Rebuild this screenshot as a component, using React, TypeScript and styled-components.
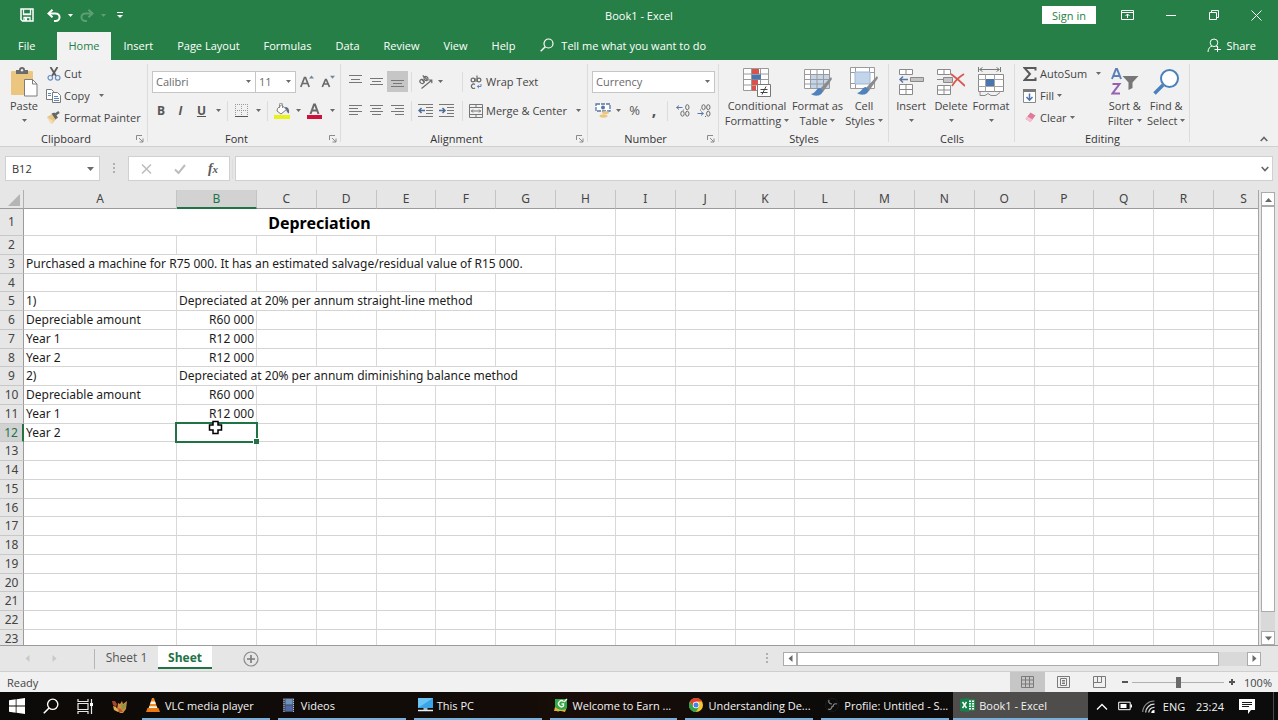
import React from "react";
import styled, { createGlobalStyle, css } from "styled-components";

const ui = '"Open Sans", "Noto Sans", "Liberation Sans", sans-serif';
const sheetFont = '"Noto Sans", "Open Sans", "Liberation Sans", sans-serif';
const green = "#267f46";
const accent = "#217346";
const ink = "#444444";
const grey = "#6a6a6a";

const Global = createGlobalStyle`
  *, *::before, *::after { box-sizing: border-box; }
  body { margin: 0; font: 11px/15px ${ui}; color: #333333; background: #e6e6e6; }
  button, input, select { font: inherit; color: inherit; margin: 0; padding: 0; border: 0; background: none; border-radius: 0; }
  button { cursor: default; white-space: nowrap; }
  svg { display: block; flex: none; }
`;

const Window = styled.div`
  display: flex;
  flex-direction: column;
  height: 100vh;
  overflow: hidden;
`;

/* ---------- title bar ---------- */
const TitleBar = styled.header`
  display: grid;
  grid-template-columns: 1fr auto 1fr;
  align-items: center;
  height: 30px;
  flex: none;
  background: ${green};
  color: #ffffff;
`;
const QuickAccess = styled.div`
  display: flex;
  align-items: center;
  padding-left: 14px;
`;
const Title = styled.h1`
  margin: 0;
  font-size: 11px;
  line-height: 15px;
  font-weight: 400;
`;
const WindowControls = styled.div`
  display: flex;
  align-items: center;
  justify-content: flex-end;
`;
const SignIn = styled.button`
  height: 18px;
  width: 54px;
  margin-right: 10px;
  background: #ffffff;
  color: ${green};
`;

const IconButton = styled.button<{ $w: number; $h?: number; $on?: boolean; $dim?: boolean }>`
  display: flex;
  align-items: center;
  justify-content: center;
  flex: none;
  width: ${(p) => p.$w}px;
  height: ${(p) => p.$h ?? 21}px;
  background: ${(p) => (p.$on ? "#c6c6c6" : "transparent")};
  opacity: ${(p) => (p.$dim ? 0.25 : 1)};
`;

/* ---------- tab strip ---------- */
const TabBar = styled.nav`
  display: flex;
  align-items: flex-end;
  height: 30px;
  flex: none;
  padding-left: 7px;
  background: ${green};
  color: #ffffff;
`;
const Tab = styled.button<{ $active?: boolean; $first?: boolean }>`
  height: 28px;
  padding: 0 11px 2px;
  margin-right: ${(p) => (p.$first ? 11 : 2)}px;
  background: ${(p) => (p.$active ? "#f2f2f2" : "transparent")};
  color: ${(p) => (p.$active ? green : "#ffffff")};
`;
const TellMe = styled.label`
  display: flex;
  align-items: center;
  gap: 7px;
  height: 28px;
  padding-bottom: 2px;
  margin-left: 12px;
`;
const TellMeInput = styled.input`
  width: 160px;
  outline: none;
  &::placeholder { color: #ffffff; opacity: 1; }
`;
const Share = styled.button`
  display: flex;
  align-items: center;
  gap: 4px;
  height: 28px;
  padding-bottom: 2px;
  margin-left: auto;
  margin-right: 22px;
`;

/* ---------- ribbon ---------- */
const Ribbon = styled.section`
  display: flex;
  flex: none;
  height: 87px;
  background: #f1f1f1;
  border-bottom: 1px solid #d0d0d0;
`;
const Group = styled.div<{ $w: number }>`
  position: relative;
  display: flex;
  flex-direction: column;
  flex: none;
  width: ${(p) => p.$w}px;
  padding-top: 3px;
  &::after {
    content: "";
    position: absolute;
    right: 0;
    top: 4px;
    bottom: 4px;
    border-right: 1px solid #dcdcdc;
  }
`;
const GroupBody = styled.div<{ $pad?: number }>`
  display: flex;
  height: 68px;
  padding-left: ${(p) => p.$pad ?? 4}px;
`;
const GroupFooter = styled.div<{ $launcher?: boolean }>`
  display: grid;
  grid-template-columns: ${(p) => (p.$launcher ? "1fr 16px" : "1fr")};
  align-items: center;
  height: 15px;
  text-align: center;
`;
const BigButton = styled.button<{ $w: number }>`
  display: flex;
  flex-direction: column;
  align-items: center;
  flex: none;
  width: ${(p) => p.$w}px;
  height: 68px;
  padding-top: 3px;
  color: ${ink};
`;
const BigIcon = styled.span`
  display: flex;
  align-items: center;
  height: 32px;
`;
const BigLine = styled.span`
  display: flex;
  align-items: center;
  gap: 3px;
  height: 15px;
`;
const SmallStack = styled.div`
  display: flex;
  flex-direction: column;
  gap: 1px;
`;
const SmallButton = styled.button`
  display: flex;
  align-items: center;
  height: 21px;
  gap: 3px;
  color: ${ink};
`;
const SmallIcon = styled.span`
  display: flex;
  justify-content: center;
  width: 15px;
`;
const CaretSlot = styled.span`
  display: flex;
  padding-left: 6px;
`;
const ToolRows = styled.div`
  display: flex;
  flex-direction: column;
  gap: 8px;
  padding-top: 8px;
`;
const ToolRow = styled.div`
  display: flex;
  align-items: center;
  height: 21px;
`;
const ToolPair = styled.div`
  display: flex;
  width: 42px;
`;
const Divider = styled.span<{ $m?: number }>`
  width: 1px;
  height: 20px;
  margin: 0 ${(p) => p.$m ?? 4}px;
  background: #dcdcdc;
`;
const SelectBox = styled.span<{ $w: number }>`
  position: relative;
  display: block;
  width: ${(p) => p.$w}px;
  height: 22px;
  margin-right: -1px;
  > svg { position: absolute; right: 5px; top: 9px; pointer-events: none; }
`;
const Select = styled.select`
  appearance: none;
  width: 100%;
  height: 100%;
  padding-left: 3px;
  border: 1px solid #c6c6c6;
  background: #ffffff;
  color: ${grey};
`;
const Glyph = styled.span<{ $b?: boolean; $i?: boolean; $u?: boolean; $size?: number }>`
  font-size: ${(p) => p.$size ?? 12}px;
  line-height: 15px;
  font-weight: ${(p) => (p.$b ? 700 : 400)};
  font-style: ${(p) => (p.$i ? "italic" : "normal")};
  text-decoration: ${(p) => (p.$u ? "underline" : "none")};
  color: #565656;
`;
const Collapse = styled.div`
  display: flex;
  flex: 1;
  align-items: flex-end;
  justify-content: flex-end;
  padding: 0 4px 0 0;
`;

/* ---------- formula bar ---------- */
const FormulaBar = styled.section`
  display: flex;
  align-items: center;
  flex: none;
  height: 43px;
  padding: 0 5px;
  background: #e6e6e6;
`;
const BarBox = styled.div<{ $w?: number }>`
  display: flex;
  align-items: center;
  flex: ${(p) => (p.$w ? "none" : "1")};
  width: ${(p) => (p.$w ? `${p.$w}px` : "auto")};
  height: 25px;
  background: #ffffff;
  border: 1px solid #d0d0d0;
`;
const BarInput = styled.input`
  flex: 1;
  min-width: 0;
  height: 100%;
  padding-left: 6px;
  outline: none;
`;
const Dots = styled.span<{ $m: number }>`
  width: 2px;
  height: 11px;
  margin: 0 ${(p) => p.$m}px;
  background: repeating-linear-gradient(#b0b0b0 0 2px, transparent 2px 4px);
`;

/* ---------- sheet ---------- */
const SheetArea = styled.main`
  display: flex;
  flex: 1;
  min-height: 0;
  border-bottom: 1px solid #9b9b9b;
`;
const GridView = styled.div`
  flex: 1;
  min-width: 0;
  overflow: hidden;
  border-right: 1px solid #a6a6a6;
`;
const SheetTable = styled.table`
  width: calc(100% + 16px);
  table-layout: fixed;
  border-collapse: separate;
  border-spacing: 0;
  font: 12px/16px ${sheetFont};
  color: #1c1c1c;
`;
const Col = styled.col<{ $w: number }>`
  width: ${(p) => p.$w}px;
`;
const ColHead = styled.th<{ $on?: boolean }>`
  height: 19px;
  padding: 0;
  font-weight: 400;
  color: ${(p) => (p.$on ? accent : ink)};
  background: ${(p) => (p.$on ? "#d2d2d2" : "#e6e6e6")};
  border-right: 1px solid #c4c4c4;
  border-bottom: ${(p) => (p.$on ? `2px solid ${accent}` : "1px solid #9b9b9b")};
`;
const Corner = styled.th`
  padding: 0 3px 2px 0;
  vertical-align: bottom;
  background: #e6e6e6;
  border-right: 1px solid #b0b0b0;
  border-bottom: 1px solid #9b9b9b;
  > svg { margin-left: auto; }
`;
const Row = styled.tr<{ $tall?: boolean }>`
  height: ${(p) => (p.$tall ? 27 : 19)}px;
  &:nth-child(4n) { height: 18px; }
`;
const RowHead = styled.th<{ $on?: boolean }>`
  padding: 0;
  font-weight: 400;
  color: ${(p) => (p.$on ? accent : ink)};
  background: ${(p) => (p.$on ? "#d2d2d2" : "#e6e6e6")};
  border-right: ${(p) => (p.$on ? `2px solid ${accent}` : "1px solid #9b9b9b")};
  border-bottom: 1px solid #c8c8c8;
`;
const Cell = styled.td<{ $align?: string; $title?: boolean }>`
  position: relative;
  padding: 0 2px;
  white-space: nowrap;
  background: #ffffff;
  border-right: 1px solid #d9d9d9;
  border-bottom: 1px solid #d4d4d4;
  text-align: ${(p) => p.$align ?? "left"};
  ${(p) =>
    p.$title &&
    css`
      padding-top: 2px;
      font-size: 16px;
      line-height: 22px;
      font-weight: 700;
      color: #000000;
    `}
`;
const Selection = styled.div`
  position: absolute;
  z-index: 1;
  inset: -2px;
  border: 2px solid ${accent};
  &::after {
    content: "";
    position: absolute;
    right: -3px;
    bottom: -3px;
    width: 6px;
    height: 6px;
    background: ${accent};
    border: 1px solid #ffffff;
    border-width: 1px 0 0 1px;
  }
`;
const Pointer = styled.svg`
  position: absolute;
  z-index: 2;
  left: 31px;
  top: -4px;
`;

const VScroll = styled.div`
  display: flex;
  flex-direction: column;
  flex: none;
  width: 14px;
  margin: 2px 3px 0 2px;
  background: #d9d9d9;
`;
const ScrollButton = styled.button`
  display: flex;
  align-items: center;
  justify-content: center;
  flex: none;
  width: 14px;
  height: 14px;
  background: #ffffff;
  border: 1px solid #ababab;
`;
const VThumb = styled.div`
  flex: 1;
  margin-bottom: 19px;
  background: #ffffff;
  border: 1px solid #ababab;
`;
const HThumb = styled.div`
  flex: 1;
  margin-right: 28px;
  background: #ffffff;
  border: 1px solid #ababab;
`;

/* ---------- sheet tabs ---------- */
const SheetBar = styled.section`
  display: flex;
  align-items: center;
  flex: none;
  height: 26px;
  padding-right: 17px;
  background: #e6e6e6;
  border-bottom: 1px solid #cfcfcf;
`;
const SheetNav = styled.div`
  display: flex;
  align-items: center;
  width: 95px;
  height: 20px;
  padding-left: 14px;
  border-right: 1px solid #b5b5b5;
`;
const SheetTab = styled.button<{ $active?: boolean }>`
  align-self: flex-start;
  height: 23px;
  padding-top: 2px;
  width: ${(p) => (p.$active ? 54 : 63)}px;
  font-size: 12px;
  font-weight: ${(p) => (p.$active ? 700 : 400)};
  color: ${(p) => (p.$active ? accent : "#555555")};
  background: ${(p) => (p.$active ? "#ffffff" : "transparent")};
  border-bottom: 2px solid ${(p) => (p.$active ? accent : "transparent")};
`;
const AddSheet = styled.button`
  margin-left: 31px;
`;
const HScroll = styled.div`
  display: flex;
  flex: 0 1 478px;
  height: 14px;
  background: #d9d9d9;
`;
const Spacer = styled.span`
  flex: 1;
`;

/* ---------- status bar ---------- */
const StatusBar = styled.footer`
  display: flex;
  align-items: center;
  flex: none;
  height: 20px;
  padding: 0 6px 0 7px;
  background: #f1f1f1;
  color: ${ink};
`;
const ZoomRange = styled.input`
  appearance: none;
  width: 92px;
  height: 15px;
  &::-webkit-slider-runnable-track { height: 1px; background: #b0b0b0; }
  &::-webkit-slider-thumb {
    appearance: none;
    width: 5px;
    height: 11px;
    margin-top: -5px;
    background: #6a6a6a;
  }
`;
const ZoomValue = styled.output`
  width: 33px;
  text-align: right;
`;

/* ---------- taskbar ---------- */
const Taskbar = styled.nav`
  display: flex;
  flex: none;
  height: 28px;
  background: linear-gradient(90deg, #0c0a08, #130c08 40%, #1a0d09 46%, #0d0b0a 60%, #0c0c0c);
  color: #f2f2f2;
`;
const TaskShortcuts = styled.div`
  display: flex;
  width: 137px;
  flex: none;
`;
const TaskList = styled.div`
  display: flex;
  flex: 1;
  gap: 8px;
  min-width: 0;
  padding-left: 5px;
`;
const Task = styled.button<{ $active?: boolean }>`
  display: flex;
  align-items: center;
  gap: 4px;
  flex: ${(p) => (p.$active ? "1 1 135px" : "0 1 128px")};
  min-width: 0;
  height: 28px;
  padding-left: ${(p) => (p.$active ? 7 : 4)}px;
  margin-left: ${(p) => (p.$active ? -4 : 0)}px;
  background: ${(p) => (p.$active ? "#4e4d4c" : "transparent")};
  border-bottom: 2px solid #76b0dc;
`;
const TaskIcon = styled.span`
  display: flex;
  width: 15px;
`;
const Tray = styled.div`
  display: flex;
  align-items: center;
  flex: none;
  width: 190px;
  padding-left: 3px;
`;
const TrayText = styled.span<{ $w: number }>`
  width: ${(p) => p.$w}px;
  text-align: center;
`;
const ShowDesktop = styled.span`
  width: 1px;
  height: 28px;
  margin-left: auto;
  margin-right: 4px;
  background: #4a4a4a;
`;

/* ---------- icons ---------- */
type SvgProps = { w: number; h: number; children: React.ReactNode };
const Svg = ({ w, h, children }: SvgProps) => (
  <svg width={w} height={h} viewBox={`0 0 ${w} ${h}`} fill="none" aria-hidden="true">
    {children}
  </svg>
);
const Caret = ({ c = "#6a6a6a" }: { c?: string }) => (
  <Svg w={5} h={3}>
    <path d="M0 0h5L2.5 3z" fill={c} />
  </Svg>
);
const NameCaret = () => (
  <Svg w={7} h={4}>
    <path d="M0 0h7L3.5 4z" fill="#6a6a6a" />
  </Svg>
);
const Launcher = () => (
  <Svg w={8} h={8}>
    <path d="M.5 5V.5H6M3 3l4 4M7 3.5V7H3.5" stroke="#8a8a8a" />
  </Svg>
);
const SaveIcon = () => (
  <Svg w={14} h={14}>
    <path d="M1 1h12v12H2.5L1 11.5z" stroke="#fff" strokeWidth="1.5" />
    <path d="M3.5 1v5.500h7V1M4 13V9.500h6V13" stroke="#fff" strokeWidth="1.300" />
    <path d="M3.500 5.500h7v1.500h-7zM5 10h2v3H5z" fill="#fff" />
  </Svg>
);
const UndoIcon = () => (
  <Svg w={14} h={13}>
    <path d="M2 4.500h6.500a4 3.700 0 010 7.500H7" stroke="#fff" strokeWidth="2" />
    <path d="M5.500.8L1.500 4.500l4 3.700" stroke="#fff" strokeWidth="2" />
  </Svg>
);
const RedoIcon = () => (
  <Svg w={14} h={13}>
    <path d="M12 4.500H5.500a4 3.700 0 000 7.500H7" stroke="#fff" strokeWidth="2" />
    <path d="M8.500.8l4 3.700-4 3.700" stroke="#fff" strokeWidth="2" />
  </Svg>
);
const CustomiseIcon = () => (
  <Svg w={6} h={6}>
    <path d="M0 .5h6" stroke="#fff" />
    <path d="M0 3h6L3 6z" fill="#fff" />
  </Svg>
);
const RibbonDisplayIcon = () => (
  <Svg w={13} h={10}>
    <path d="M.5.5h12v9H.5zM.5 2.500h12M6.500 8V4M4.500 6l2-2 2 2" stroke="#fff" />
  </Svg>
);
const MinimizeIcon = () => (
  <Svg w={10} h={3}>
    <path d="M0 1.500h10" stroke="#fff" />
  </Svg>
);
const RestoreIcon = () => (
  <Svg w={10} h={10}>
    <path d="M.5 2.500h7v7h-7zM2.500 2.500v-2h7v7h-2" stroke="#fff" />
  </Svg>
);
const CloseIcon = () => (
  <Svg w={11} h={11}>
    <path d="M.5.5l10 10M10.500.5l-10 10" stroke="#fff" />
  </Svg>
);
const SearchIcon = ({ s = 14 }: { s?: number }) => (
  <svg width={s} height={s} viewBox="0 0 14 14" fill="none" aria-hidden="true">
    <circle cx="8.500" cy="5.500" r="4.500" stroke="#fff" strokeWidth="1.200" />
    <path d="M5.300 8.700L.7 13.300" stroke="#fff" strokeWidth="1.400" />
  </svg>
);
const ShareIcon = () => (
  <Svg w={15} h={15}>
    <circle cx="7" cy="4.800" r="3.800" stroke="#fff" />
    <path d="M1 14c0-3.500 2-5.500 4-6M9 8c1 .3 1.800 1 2 1.500M10.500 8v6M7.500 11.500h6.500" stroke="#fff" />
  </Svg>
);
const PasteIcon = () => (
  <Svg w={28} h={30}>
    <rect x="1" y="4" width="22" height="24" rx="1" fill="#ecc67f" />
    <path d="M6 3h3a3 3 0 016 0h3v4H6z" fill="#6b6b6b" />
    <circle cx="12" cy="3.300" r="1.200" fill="#f1f1f1" />
    <path d="M14.500 12.500h8l4.500 4.500v12H14.500z" fill="#fff" stroke="#7d7d7d" />
    <path d="M22.500 12.500V17H27" stroke="#7d7d7d" />
  </Svg>
);
const CutIcon = () => (
  <Svg w={14} h={14}>
    <path d="M3.500 0l5.500 9M10.500 0L5 9" stroke="#5c5c5c" strokeWidth="1.800" />
    <circle cx="3.300" cy="10.800" r="2.300" stroke="#6a8fc3" strokeWidth="1.200" />
    <circle cx="10.700" cy="10.800" r="2.300" stroke="#6a8fc3" strokeWidth="1.200" />
  </Svg>
);
const CopyIcon = () => (
  <Svg w={15} h={14}>
    <path d="M.5.5h5l2 2v8h-7z" fill="#fff" stroke="#7a7a7a" />
    <path d="M6.500 3.500h5l3 3v7h-8z" fill="#fff" stroke="#7a7a7a" />
    <path d="M2 4.500h3M2 6.500h3M8 7.500h4M8 9.500h5M8 11.500h5" stroke="#5b87bd" />
  </Svg>
);
const PainterIcon = () => (
  <Svg w={15} h={13}>
    <path d="M1 6l5-3 4 5-4 5z" fill="#e9c789" />
    <path d="M1 6l3 6 2 1 1-3z" fill="#f3dcb2" />
    <path d="M5.500 2.500l3-1 3.500 5-2.500 2z" fill="#666" />
    <path d="M9.500 3.500L13 1" stroke="#666" strokeWidth="2.400" />
  </Svg>
);
const FontSizeIcon = ({ up }: { up?: boolean }) => (
  <Svg w={14} h={13}>
    <path
      d={up ? "M.8 12L4.500 2.500h1L9.200 12M2.200 8.500h5.600" : "M1.300 12l3.200-7.500h.8L8.500 12M2.500 9h4.800"}
      stroke="#6a6a6a"
      strokeWidth="1.700"
    />
    <path d={up ? "M9 3.500h5L11.500.5z" : "M9 .8h5l-2.500 3z"} fill="#76859a" />
  </Svg>
);
const BordersIcon = () => (
  <Svg w={13} h={13}>
    <path d="M.5 0v12M6.500 0v12M12.500 0v12M0 .5h13M0 6.500h13" stroke="#9a9a9a" strokeDasharray="1 1" />
    <path d="M0 12.500h13" stroke="#555" />
  </Svg>
);
const FillColorIcon = () => (
  <Svg w={16} h={16}>
    <path d="M3.500 5.500l4-3.500 5 4.500-5.500 4.500-4-3z" fill="#fff" stroke="#7a7a7a" />
    <path d="M5.500 5V1.500a1.500 1.500 0 013 0V5" stroke="#8a8a8a" />
    <path d="M11 4c3.500 0 4.500 2.500 4 6.500-2-.5-2.500-3-4-6.500z" fill="#5e6f86" />
    <path d="M0 12h16v4H0z" fill="#e8f218" />
  </Svg>
);
const FontColorIcon = () => (
  <Svg w={15} h={16}>
    <path d="M3.500 11L7 1.500h1L11.500 11M4.800 7.500h5.400" stroke="#6a6a6a" strokeWidth="2" />
    <path d="M0 12h15v4H0z" fill="#d0103a" />
  </Svg>
);
type LineKind = "top" | "middle" | "bottom" | "left" | "center" | "right";
const linePaths: Record<LineKind, string> = {
  top: "M0 .5h13M2 4.500h9M0 7.500h13",
  middle: "M0 3.500h13M2 6.500h9M0 9.500h13",
  bottom: "M0 5.500h13M2 8.500h9M0 11.500h13",
  left: "M0 1.500h13M0 4.500h9M0 7.500h13M0 10.500h9",
  center: "M0 1.500h13M2 4.500h9M0 7.500h13M2 10.500h9",
  right: "M0 1.500h13M4 4.500h9M0 7.500h13M4 10.500h9",
};
const LinesIcon = ({ kind }: { kind: LineKind }) => (
  <Svg w={13} h={13}>
    <path d={linePaths[kind]} stroke="#777" />
  </Svg>
);
const OrientationIcon = () => (
  <Svg w={16} h={14}>
    <g stroke="#6a6a6a" strokeWidth="1.200">
      <ellipse cx="4" cy="6.500" rx="2" ry="2.200" transform="rotate(-45 4 6.500)" />
      <path d="M3.300 4.100l3.200 3.200" />
      <ellipse cx="8" cy="3.500" rx="1.800" ry="2.200" transform="rotate(-45 8 3.500)" />
      <path d="M4.700.5l4.600 4.300M3.500 13.500L14 5M10.500 5h3.300v3.200" />
    </g>
  </Svg>
);
const IndentIcon = ({ inward }: { inward?: boolean }) => (
  <Svg w={15} h={13}>
    <path d="M0 .5h15M8 3.500h7M8 6.500h7M8 9.500h7M0 12.500h15" stroke="#777" />
    <path
      d={inward ? "M0 6.500h6M3.500 4L6 6.500 3.500 9" : "M7 6.500H1M3.500 4L1 6.500 3.500 9"}
      stroke="#4a6d99"
      strokeWidth="1.500"
    />
  </Svg>
);
const WrapIcon = () => (
  <Svg w={12} h={14}>
    <g stroke="#6a6a6a" strokeWidth="1.200">
      <circle cx="3" cy="5" r="1.900" />
      <path d="M5 3v4M7 .5V7" />
      <circle cx="9" cy="5" r="1.900" />
      <path d="M5 9.500a2.200 2.200 0 100 3.500" />
    </g>
    <path d="M11 9v2.500H7.500M9 9.800l-1.700 1.700L9 13.200" stroke="#5b87bd" />
  </Svg>
);
const MergeIcon = () => (
  <Svg w={14} h={14}>
    <path d="M.5.5h13v13H.5zM.5 3.500h13M.5 10.500h13M7 .5v3M7 10.500v3" stroke="#777" />
    <path d="M2 7h10M4 5.500L2.500 7 4 8.500M10 5.500L11.500 7 10 8.500" stroke="#777" />
  </Svg>
);
const CurrencyIcon = () => (
  <Svg w={16} h={15}>
    <path d="M1 1h14v7H1z" fill="#fff" stroke="#5877a6" strokeWidth="1.300" strokeDasharray="4 1" />
    <circle cx="8" cy="4.500" r="2" fill="#5877a6" />
    <ellipse cx="10.500" cy="9.500" rx="3.500" ry="1.500" fill="#ecc67f" />
    <ellipse cx="8.500" cy="13" rx="4" ry="1.700" fill="#ecc67f" />
  </Svg>
);
const DecimalIcon = ({ more }: { more?: boolean }) => (
  <Svg w={14} h={13}>
    <g stroke="#6a6a6a">
      {more ? (
        <>
          <path d="M.5 3.500h6M3 1.500l-2.300 2L3 5.500M7.500 5.500v1" stroke="#5877a6" />
          <ellipse cx="11.300" cy="3.200" rx="1.700" ry="2.500" />
          <ellipse cx="6.500" cy="9.700" rx="1.700" ry="2.500" />
          <ellipse cx="11.300" cy="9.700" rx="1.700" ry="2.500" />
        </>
      ) : (
        <>
          <ellipse cx="6.500" cy="3.200" rx="1.700" ry="2.500" />
          <ellipse cx="11.300" cy="3.200" rx="1.700" ry="2.500" />
          <path d="M3.500 5.500v1M8.500 12v1" />
          <path d="M.5 9.500h6M4 7.500l2.300 2-2.300 2" stroke="#5877a6" />
          <ellipse cx="11.300" cy="9.700" rx="1.700" ry="2.500" />
        </>
      )}
    </g>
  </Svg>
);
const ConditionalIcon = () => (
  <Svg w={28} h={29}>
    <path d="M.5.5h25v22H.5zM.5 6h25M.5 11.500h25M.5 17h25M8.500.5v22M17.500.5v22" fill="#fff" stroke="#9a9a9a" />
    <path d="M9 1h7v5H9zM9 12h6v5H9zM9 17.500h4v5H9z" fill="#d9534a" />
    <path d="M9 6.500h9v5H9z" fill="#4a75ad" />
    <path d="M14.500 16.500h13v12h-13z" fill="#fff" stroke="#777" />
    <path d="M17.500 21.500h7M17.500 24.500h7M23 18.500l-4 8" stroke="#444" />
  </Svg>
);
const Brush = () => (
  <>
    <path d="M28 9L17 21l3 3 9-13z" fill="#8b8b8b" />
    <path d="M17 20c-4 0-4 5-9 6 4 3 11 2 12-3z" fill="#4f81bd" />
  </>
);
const TableStyleIcon = () => (
  <Svg w={30} h={28}>
    <path d="M1.500 1.500h25v19h-25z" fill="#fff" stroke="#9a9a9a" />
    <path d="M8 7h18v13H8z" fill="#c3d5ea" />
    <path d="M1.500 6.500h25M1.500 11.500h25M1.500 16h25M7.500 1.500v19M14 1.500v19M20.500 1.500v19" stroke="#9a9a9a" />
    <Brush />
  </Svg>
);
const CellStyleIcon = () => (
  <Svg w={30} h={30}>
    <path d="M1.500.5h24v21h-24z" fill="#fff" stroke="#9a9a9a" />
    <path d="M1.500 5.500h24M1.500 16.500h24M6.500.5v21M20.500.5v21" stroke="#9a9a9a" />
    <path d="M6 5h15v12H6z" fill="#c3d5ea" stroke="#9fb6d2" />
    <Brush />
  </Svg>
);
const InsertIcon = () => (
  <Svg w={26} h={28}>
    <path d="M1.500 1.500h13v5h-13zM8 1.500v5M1.500 16.500h13v10h-13zM8 16.500v10M1.500 21.500h13" fill="#fff" stroke="#8a8a8a" />
    <path d="M12.500 9.500h13v4h-13z" fill="#c4c4c4" stroke="#8a8a8a" />
    <path d="M10 11.500H2M5 8.500l-3 3 3 3" stroke="#5877a6" strokeWidth="1.500" />
  </Svg>
);
const DeleteIcon = () => (
  <Svg w={28} h={28}>
    <path d="M.5 1.500h13v5H.5zM7 1.500v5M.5 17.500h13v9H.5zM7 17.500v9M.5 22h13" fill="#fff" stroke="#8a8a8a" />
    <path d="M6.500 9.500h9v5h-9z" fill="#c4c4c4" stroke="#8a8a8a" />
    <path d="M0 11.500h6" stroke="#8a8a8a" />
    <path d="M14 6c4 3 9 7 14 12M27 6c-5 3-9 7-12 12" stroke="#d9584e" strokeWidth="1.800" />
  </Svg>
);
const FormatIcon = () => (
  <Svg w={27} h={30}>
    <path d="M.5 0v5M22.500 0v5M2 2.500h19M4.500.5l-3 2 3 2M18.500.5l3 2-3 2" stroke="#7a7a7a" />
    <path d="M.5 7.500h25v17H.5z" fill="#fff" stroke="#8a8a8a" />
    <path d="M.5 12.500h25M.5 19.500h25M7.500 7.500v17M16.500 7.500v17" stroke="#a5a5a5" />
    <path d="M8 12h8v7H8z" fill="#4a75ad" />
    <path d="M2 24.500v4h5l3-2 3 2h5l4-3" stroke="#8a8a8a" />
  </Svg>
);
const SumIcon = () => (
  <Svg w={14} h={14}>
    <path d="M12.500 3.500V1H1.500L7 7l-5.500 6h11v-2.500" stroke="#5a5a5a" strokeWidth="2" />
  </Svg>
);
const FillIcon = () => (
  <Svg w={13} h={14}>
    <path d="M.5.5h12v13H.5z" fill="#fff" stroke="#8a8a8a" />
    <path d="M0 0h13v3H0z" fill="#7a7a7a" />
    <path d="M6.500 4.500V11M3.500 8l3 3.200 3-3.200" stroke="#4a75ad" strokeWidth="1.500" />
  </Svg>
);
const EraserIcon = () => (
  <Svg w={12} h={11}>
    <path d="M6.500.5l5 3-5 6.500-5-3z" fill="#e07a98" />
    <path d="M3.500 4.500l5 3-2 2.500-5-3z" fill="#f3c3d1" />
  </Svg>
);
const SortIcon = () => (
  <Svg w={28} h={28}>
    <path d="M1 11L5 1h1l4 10M2.500 8h6" stroke="#5b7fb8" strokeWidth="2" />
    <path d="M1.500 16H8.500L1.500 25.500h7.500" stroke="#9561b3" strokeWidth="2" />
    <path d="M11.500 8h16l-6 6.500V20l-4 2v-7.500z" fill="#777" />
  </Svg>
);
const FindIcon = () => (
  <Svg w={28} h={28}>
    <circle cx="17.500" cy="10.500" r="8.500" fill="#fff" stroke="#4a80bb" strokeWidth="2" />
    <path d="M11 17L2.500 25.500" stroke="#4a80bb" strokeWidth="3.500" />
  </Svg>
);
const ChevronIcon = ({ up, c = "#666666" }: { up?: boolean; c?: string }) => (
  <Svg w={8} h={6}>
    <path d={up ? "M.7 5L4 1.500 7.300 5" : "M.7 1L4 4.500 7.300 1"} stroke={c} strokeWidth="1.600" />
  </Svg>
);
const CancelIcon = () => (
  <Svg w={11} h={10}>
    <path d="M1 .5l9 9M10 .5l-9 9" stroke="#bdbdbd" strokeWidth="1.500" />
  </Svg>
);
const CheckIcon = () => (
  <Svg w={12} h={10}>
    <path d="M1 5.500L4.500 9 11 1" stroke="#bdbdbd" strokeWidth="2" />
  </Svg>
);
const FxGlyph = styled.span`
  font: italic 700 14px/16px "Liberation Serif", serif;
  color: #5a5a5a;
`;
const FxSub = styled.small`
  font-size: 11px;
`;
const Triangle = ({ dir, c = "#6a6a6a" }: { dir: "up" | "down" | "left" | "right"; c?: string }) => {
  const d = { up: "M0 6l3.500-4L7 6z", down: "M0 1.500l3.500 4 3.500-4z", left: "M5.500 0v7l-4-3.500z", right: "M1.500 0v7l4-3.500z" }[dir];
  return (
    <Svg w={7} h={7}>
      <path d={d} fill={c} />
    </Svg>
  );
};
const PlusCircle = () => (
  <Svg w={16} h={16}>
    <circle cx="8" cy="8" r="7" stroke="#8a8a8a" strokeWidth="1.200" />
    <path d="M8 4v8M4 8h8" stroke="#7a7a7a" strokeWidth="1.600" />
  </Svg>
);
const NormalViewIcon = () => (
  <Svg w={13} h={12}>
    <path d="M.5.5h12v11H.5zM.5 4h12M.5 8h12M4.500.5v11M8.500.5v11" stroke="#7a7a7a" />
  </Svg>
);
const PageViewIcon = () => (
  <Svg w={13} h={12}>
    <path d="M.5.5h12v11H.5zM3.500 2.500h6v7h-6zM5 4.500h3M5 6h3M5 7.500h3" stroke="#7a7a7a" />
  </Svg>
);
const BreakViewIcon = () => (
  <Svg w={13} h={12}>
    <path d="M.5.5h12v11H.5zM4.500.5v6M8.500.5v6M.5 6.500h8" stroke="#7a7a7a" />
  </Svg>
);
const WindowsIcon = () => (
  <Svg w={16} h={16}>
    <path d="M0 2.300l6.700-1v6.300H0zM7.500 1.200L16 0v7.600H7.500zM0 8.400h6.700v6.300L0 13.700zM7.500 8.400H16V16l-8.500-1.200z" fill="#fff" />
  </Svg>
);
const TaskViewIcon = () => (
  <Svg w={16} h={15}>
    <path d="M1 0v2.500h10V0M1 15v-2.500h10V15M1 4.500h10v6H1zM14.500 0v15" stroke="#e8e8e8" strokeWidth="1.200" />
    <path d="M13 4h3v3h-3z" fill="#fff" />
  </Svg>
);
const BirdIcon = () => (
  <Svg w={15} h={14}>
    <path d="M6 4l2 1 2-3 1 3 4-3-1 8-3 4H8L5 11z" fill="#d58a3c" />
    <path d="M9 5l2 1 3-2-1 5-3 2z" fill="#7f9a48" />
    <path d="M0 2l3 0 2 3-1 3-3-2z" fill="#a8432e" />
    <path d="M1 7l3 1 3 4-1 1-4-2z" fill="#e0ad55" />
    <path d="M6 9l3 1 2 3H7z" fill="#b8552c" />
  </Svg>
);
const VlcIcon = () => (
  <Svg w={14} h={14}>
    <path d="M6 0h2l3.500 10.500h-9z" fill="#f08a1d" />
    <path d="M5 3.500h4l.8 2.500H4.200z" fill="#f4f4f4" />
    <path d="M1.500 10h11l1.500 4H0z" fill="#e87812" />
    <path d="M3.300 8.300h7.400l.6 1.700H2.700z" fill="#f4f4f4" />
  </Svg>
);
const VideosIcon = () => (
  <Svg w={14} h={14}>
    <path d="M1 0h11v14H1z" fill="#3f4a5a" />
    <path d="M3.500 1h7v5.500h-7z" fill="#6e93bd" />
    <path d="M3.500 7.500h7V13h-7z" fill="#5068a8" />
    <path d="M2 1v13M11.500 1v13" stroke="#b9c0c8" strokeDasharray="1 1" />
  </Svg>
);
const PcIcon = () => (
  <Svg w={15} h={14}>
    <path d="M0 0h15v10H0z" fill="#3ba3e8" />
    <path d="M0 0h15L0 10z" fill="#6cc4f5" />
    <path d="M5.500 10h4v2h-4z" fill="#9fb4c4" />
    <path d="M0 12.500h15" stroke="#e6eef4" strokeWidth="1.500" />
  </Svg>
);
const EarnIcon = () => (
  <Svg w={14} h={14}>
    <path d="M1 1h12v9l-2 3-4-1-3 2-3-3z" fill="#2fa84a" />
    <path d="M1 9l-1 4h7l4 1 1-3-4 1-4-1z" fill="#e6b33a" />
    <path d="M9.500 3.500a3 3 0 100 4.500V6H7.500M10 4l3-3" stroke="#f6f6ee" strokeWidth="1.400" />
  </Svg>
);
const ChromeIcon = () => (
  <Svg w={14} h={14}>
    <circle cx="7" cy="7" r="7" fill="#f7c52b" />
    <path d="M.9 3.500A7 7 0 0113.100 3.500H7L4 8.800z" fill="#e2412f" />
    <path d="M.9 3.500A7 7 0 007 14l3-5.200H4z" fill="#2fa24c" />
    <circle cx="7" cy="7" r="3.200" fill="#fff" />
    <circle cx="7" cy="7" r="2.500" fill="#4384ec" />
  </Svg>
);
const ObsIcon = () => (
  <Svg w={14} h={14}>
    <circle cx="7" cy="7" r="6.500" fill="#0c0c0c" stroke="#1c1c1c" />
    <path d="M4 2c-1 3 1 4 3 4M12 6c-3-1-4 1-4 3M3 11c2 1 4 0 4-3" stroke="#8a8a8a" strokeWidth="1.200" />
  </Svg>
);
const ExcelIcon = () => (
  <Svg w={15} h={14}>
    <path d="M8 2h6.500v10H8z" fill="#fff" stroke="#1d9a52" />
    <path d="M9 4.500h5M9 7h5M9 9.500h5M11.500 2v10" stroke="#1d9a52" />
    <path d="M0 1l9-1v14l-9-1z" fill="#17804a" />
    <path d="M2.500 4l4 6M6.500 4l-4 6" stroke="#fff" strokeWidth="1.400" />
  </Svg>
);
const BatteryIcon = () => (
  <Svg w={14} h={10}>
    <path d="M.7 1.200h11.500v7.500H.7z" stroke="#fff" />
    <path d="M2.500 3h6v4h-6zM12.500 3.500H14v3h-1.500z" fill="#fff" />
  </Svg>
);
const WifiIcon = () => (
  <Svg w={13} h={13}>
    <path d="M.7 12A11.500 11.500 0 0112.500 1" stroke="#8a8a8a" strokeWidth="1.200" />
    <path d="M3.700 12.500A8.500 8.500 0 0112.500 4.200M6.700 12.500a5.500 5.500 0 015.800-5.200" stroke="#e0e0e0" strokeWidth="1.200" />
    <path d="M12.500 10v3H9.200a3.200 3.200 0 013.300-3z" fill="#fff" />
  </Svg>
);
const NoticeIcon = () => (
  <Svg w={16} h={15}>
    <path d="M0 0h16v11H12l-3 4v-4H0z" fill="#fff" />
    <path d="M3 3.500h10M3 5.500h10M3 7.500h7" stroke="#1a1a1a" />
  </Svg>
);

/* ---------- data ---------- */
type CellData = { text?: string; span?: number; align?: string; title?: boolean; selected?: boolean };
const columns = "ABCDEFGHIJKLMNOPQRS".split("");
const content: Record<number, CellData[]> = {
  1: [{ text: "Depreciation", span: 8, align: "center", title: true }],
  3: [{ text: "Purchased a machine for R75 000. It has an estimated salvage/residual value of R15 000.", span: 7 }],
  5: [{ text: "1)" }, { text: "Depreciated at 20% per annum straight-line method", span: 5 }],
  6: [{ text: "Depreciable amount" }, { text: "R60 000", align: "right" }],
  7: [{ text: "Year 1" }, { text: "R12 000", align: "right" }],
  8: [{ text: "Year 2" }, { text: "R12 000", align: "right" }],
  9: [{ text: "2)" }, { text: "Depreciated at 20% per annum diminishing balance method", span: 6 }],
  10: [{ text: "Depreciable amount" }, { text: "R60 000", align: "right" }],
  11: [{ text: "Year 1" }, { text: "R12 000", align: "right" }],
  12: [{ text: "Year 2" }, { selected: true }],
};
const rows = Array.from({ length: 23 }, (_, i) => {
  const cells = [...(content[i + 1] ?? [])];
  let used = cells.reduce((n, c) => n + (c.span ?? 1), 0);
  while (used < columns.length) {
    cells.push({});
    used += 1;
  }
  return { number: i + 1, cells };
});
const tabs = ["File", "Home", "Insert", "Page Layout", "Formulas", "Data", "Review", "View", "Help"];
const tasks = [
  { name: "VLC media player", icon: <VlcIcon /> },
  { name: "Videos", icon: <VideosIcon /> },
  { name: "This PC", icon: <PcIcon /> },
  { name: "Welcome to Earn ...", icon: <EarnIcon /> },
  { name: "Understanding De...", icon: <ChromeIcon /> },
  { name: "Profile: Untitled - S...", icon: <ObsIcon /> },
  { name: "Book1 - Excel", icon: <ExcelIcon />, active: true },
];

/* ---------- composed parts ---------- */
type BigProps = { w: number; icon: React.ReactNode; top: string; bottom?: string };
const Big = ({ w, icon, top, bottom }: BigProps) => (
  <BigButton $w={w}>
    <BigIcon>{icon}</BigIcon>
    <BigLine>{top}</BigLine>
    <BigLine>
      {bottom}
      <Caret />
    </BigLine>
  </BigButton>
);
type SmallProps = { icon: React.ReactNode; label: string; caret?: "near" | "far" };
const Small = ({ icon, label, caret }: SmallProps) => (
  <SmallButton>
    <SmallIcon>{icon}</SmallIcon>
    {label}
    {caret === "near" && <Caret />}
    {caret === "far" && (
      <CaretSlot>
        <Caret />
      </CaretSlot>
    )}
  </SmallButton>
);
type RibbonGroupProps = { w: number; name: string; pad?: number; launcher?: boolean; children: React.ReactNode };
const RibbonGroup = ({ w, name, pad, launcher, children }: RibbonGroupProps) => (
  <Group $w={w}>
    <GroupBody $pad={pad}>{children}</GroupBody>
    <GroupFooter $launcher={launcher}>
      <span>{name}</span>
      {launcher && (
        <IconButton $w={16} $h={15} aria-label={`${name} settings`}>
          <Launcher />
        </IconButton>
      )}
    </GroupFooter>
  </Group>
);
type PickProps = { w: number; label: string; value: string };
const Pick = ({ w, label, value }: PickProps) => (
  <SelectBox $w={w}>
    <Select aria-label={label} defaultValue={value}>
      <option>{value}</option>
    </Select>
    <Caret />
  </SelectBox>
);
const CaretButton = ({ w = 12, label }: { w?: number; label: string }) => (
  <IconButton $w={w} aria-label={label}>
    <Caret />
  </IconButton>
);

export default function App() {
  return (
    <Window>
      <Global />
      <TitleBar>
        <QuickAccess>
          <IconButton $w={26} aria-label="Save"><SaveIcon /></IconButton>
          <IconButton $w={28} aria-label="Undo"><UndoIcon /></IconButton>
          <IconButton $w={5} aria-label="Undo list"><Caret c="#ffffff" /></IconButton>
          <IconButton $w={28} $dim aria-label="Redo"><RedoIcon /></IconButton>
          <IconButton $w={5} $dim aria-label="Redo list"><Caret c="#ffffff" /></IconButton>
          <IconButton $w={27} aria-label="Customise toolbar"><CustomiseIcon /></IconButton>
        </QuickAccess>
        <Title>Book1 - Excel</Title>
        <WindowControls>
          <SignIn>Sign in</SignIn>
          <IconButton $w={43} aria-label="Ribbon display options"><RibbonDisplayIcon /></IconButton>
          <IconButton $w={43} aria-label="Minimise"><MinimizeIcon /></IconButton>
          <IconButton $w={43} aria-label="Restore"><RestoreIcon /></IconButton>
          <IconButton $w={43} aria-label="Close"><CloseIcon /></IconButton>
        </WindowControls>
      </TitleBar>

      <TabBar>
        {tabs.map((t) => (
          <Tab key={t} $active={t === "Home"} $first={t === "File"}>{t}</Tab>
        ))}
        <TellMe>
          <SearchIcon />
          <TellMeInput aria-label="Tell me" placeholder="Tell me what you want to do" />
        </TellMe>
        <Share><ShareIcon />Share</Share>
      </TabBar>

      <Ribbon>
        <RibbonGroup w={148} name="Clipboard" launcher pad={2}>
          <Big w={44} icon={<PasteIcon />} top="Paste" />
          <SmallStack>
            <Small icon={<CutIcon />} label="Cut" />
            <Small icon={<CopyIcon />} label="Copy" caret="far" />
            <Small icon={<PainterIcon />} label="Format Painter" />
          </SmallStack>
        </RibbonGroup>

        <RibbonGroup w={193} name="Font" launcher>
          <ToolRows>
            <ToolRow>
              <Pick w={104} label="Font" value="Calibri" />
              <Pick w={41} label="Font size" value="11" />
              <IconButton $w={24} aria-label="Increase font size"><FontSizeIcon up /></IconButton>
              <IconButton $w={18} aria-label="Decrease font size"><FontSizeIcon /></IconButton>
            </ToolRow>
            <ToolRow>
              <IconButton $w={18} aria-label="Bold"><Glyph $b>B</Glyph></IconButton>
              <IconButton $w={21} aria-label="Italic"><Glyph $b $i>I</Glyph></IconButton>
              <IconButton $w={21} aria-label="Underline"><Glyph $b $u>U</Glyph></IconButton>
              <CaretButton label="Underline styles" />
              <Divider $m={3} />
              <IconButton $w={21} aria-label="Borders"><BordersIcon /></IconButton>
              <CaretButton label="Border styles" />
              <Divider $m={3} />
              <IconButton $w={22} aria-label="Fill colour"><FillColorIcon /></IconButton>
              <CaretButton w={10} label="Fill colours" />
              <IconButton $w={22} aria-label="Font colour"><FontColorIcon /></IconButton>
              <CaretButton w={14} label="Font colours" />
            </ToolRow>
          </ToolRows>
        </RibbonGroup>

        <RibbonGroup w={247} name="Alignment" launcher>
          <ToolRows>
            <ToolRow>
              <IconButton $w={21} aria-label="Top align"><LinesIcon kind="top" /></IconButton>
              <IconButton $w={21} aria-label="Middle align"><LinesIcon kind="middle" /></IconButton>
              <IconButton $w={21} $on aria-label="Bottom align"><LinesIcon kind="bottom" /></IconButton>
              <Divider $m={3} />
              <ToolPair>
                <IconButton $w={21} aria-label="Orientation"><OrientationIcon /></IconButton>
                <CaretButton w={8} label="Orientation list" />
              </ToolPair>
              <Divider $m={5} />
              <Small icon={<WrapIcon />} label="Wrap Text" />
            </ToolRow>
            <ToolRow>
              <IconButton $w={21} aria-label="Align left"><LinesIcon kind="left" /></IconButton>
              <IconButton $w={21} aria-label="Center"><LinesIcon kind="center" /></IconButton>
              <IconButton $w={21} aria-label="Align right"><LinesIcon kind="right" /></IconButton>
              <Divider $m={3} />
              <ToolPair>
                <IconButton $w={21} aria-label="Decrease indent"><IndentIcon /></IconButton>
                <IconButton $w={21} aria-label="Increase indent"><IndentIcon inward /></IconButton>
              </ToolPair>
              <Divider $m={5} />
              <Small icon={<MergeIcon />} label="Merge & Center" caret="far" />
            </ToolRow>
          </ToolRows>
        </RibbonGroup>

        <RibbonGroup w={131} name="Number" launcher>
          <ToolRows>
            <ToolRow><Pick w={123} label="Number format" value="Currency" /></ToolRow>
            <ToolRow>
              <IconButton $w={21} aria-label="Accounting format"><CurrencyIcon /></IconButton>
              <CaretButton w={11} label="Currencies" />
              <IconButton $w={21} aria-label="Percent style"><Glyph $size={13}>%</Glyph></IconButton>
              <IconButton $w={18} $h={28} aria-label="Comma style"><Glyph $b $size={16}>,</Glyph></IconButton>
              <Divider />
              <IconButton $w={21} aria-label="Increase decimal"><DecimalIcon more /></IconButton>
              <IconButton $w={21} aria-label="Decrease decimal"><DecimalIcon /></IconButton>
            </ToolRow>
          </ToolRows>
        </RibbonGroup>

        <RibbonGroup w={170} name="Styles">
          <Big w={68} icon={<ConditionalIcon />} top="Conditional" bottom="Formatting" />
          <Big w={53} icon={<TableStyleIcon />} top="Format as" bottom="Table" />
          <Big w={40} icon={<CellStyleIcon />} top="Cell" bottom="Styles" />
        </RibbonGroup>

        <RibbonGroup w={126} name="Cells" pad={2}>
          <Big w={40} icon={<InsertIcon />} top="Insert" />
          <Big w={40} icon={<DeleteIcon />} top="Delete" />
          <Big w={40} icon={<FormatIcon />} top="Format" />
        </RibbonGroup>

        <RibbonGroup w={175} name="Editing" pad={7}>
          <SmallStack>
            <Small icon={<SumIcon />} label="AutoSum" caret="far" />
            <Small icon={<FillIcon />} label="Fill" caret="near" />
            <Small icon={<EraserIcon />} label="Clear" caret="near" />
          </SmallStack>
          <Big w={47} icon={<SortIcon />} top="Sort &" bottom="Filter" />
          <Big w={36} icon={<FindIcon />} top="Find &" bottom="Select" />
        </RibbonGroup>
        <Collapse>
          <IconButton $w={20} $h={15} aria-label="Collapse the ribbon"><ChevronIcon up /></IconButton>
        </Collapse>
      </Ribbon>

      <FormulaBar>
        <BarBox $w={95}>
          <BarInput aria-label="Name box" defaultValue="B12" />
          <IconButton $w={18} aria-label="Names"><NameCaret /></IconButton>
        </BarBox>
        <Dots $m={13} />
        <BarBox $w={102}>
          <IconButton $w={34} aria-label="Cancel"><CancelIcon /></IconButton>
          <IconButton $w={34} aria-label="Enter"><CheckIcon /></IconButton>
          <IconButton $w={32} aria-label="Insert function"><FxGlyph>f<FxSub>x</FxSub></FxGlyph></IconButton>
        </BarBox>
        <Divider $m={2} />
        <BarBox>
          <BarInput aria-label="Formula" />
          <IconButton $w={14} aria-label="Expand formula bar"><ChevronIcon /></IconButton>
        </BarBox>
      </FormulaBar>

      <SheetArea>
        <GridView>
          <SheetTable>
            <colgroup>
              <Col $w={24} />
              <Col $w={153} />
              <Col $w={80} />
              {columns.slice(2).map((c) => <col key={c} />)}
            </colgroup>
            <thead>
              <tr>
                <Corner aria-label="Select all">
                  <Svg w={12} h={12}><path d="M12 0v12H0z" fill="#b5b5b5" /></Svg>
                </Corner>
                {columns.map((c) => <ColHead key={c} scope="col" $on={c === "B"}>{c}</ColHead>)}
              </tr>
            </thead>
            <tbody>
              {rows.map((r) => (
                <Row key={r.number} $tall={r.number === 1}>
                  <RowHead scope="row" $on={r.number === 12}>{r.number}</RowHead>
                  {r.cells.map((c, i) => (
                    <Cell key={i} colSpan={c.span} $align={c.align} $title={c.title}>
                      {c.text}
                      {c.selected && (
                        <>
                          <Selection />
                          <Pointer width="15" height="15" viewBox="0 0 15 15" aria-hidden="true">
                            <path d="M5 1.500h5v3.500h3.500v5H10v3.500H5V10H1.500V5H5z" fill="#fff" stroke="#000" strokeWidth="1.500" />
                          </Pointer>
                        </>
                      )}
                    </Cell>
                  ))}
                </Row>
              ))}
            </tbody>
          </SheetTable>
        </GridView>
        <VScroll>
          <ScrollButton aria-label="Scroll up"><Triangle dir="up" /></ScrollButton>
          <VThumb />
          <ScrollButton aria-label="Scroll down"><Triangle dir="down" /></ScrollButton>
        </VScroll>
      </SheetArea>

      <SheetBar>
        <SheetNav>
          <IconButton $w={27} aria-label="Previous sheets"><Triangle dir="left" c="#c9c9c9" /></IconButton>
          <IconButton $w={27} aria-label="Next sheets"><Triangle dir="right" c="#c9c9c9" /></IconButton>
        </SheetNav>
        <SheetTab>Sheet 1</SheetTab>
        <SheetTab $active>Sheet</SheetTab>
        <AddSheet aria-label="New sheet"><PlusCircle /></AddSheet>
        <Spacer />
        <Dots $m={15} />
        <HScroll>
          <ScrollButton aria-label="Scroll left"><Triangle dir="left" /></ScrollButton>
          <HThumb />
          <ScrollButton aria-label="Scroll right"><Triangle dir="right" /></ScrollButton>
        </HScroll>
      </SheetBar>

      <StatusBar>
        <span>Ready</span>
        <Spacer />
        <IconButton $w={35} $on aria-label="Normal view"><NormalViewIcon /></IconButton>
        <IconButton $w={36} aria-label="Page layout view"><PageViewIcon /></IconButton>
        <IconButton $w={36} aria-label="Page break preview"><BreakViewIcon /></IconButton>
        <IconButton $w={15} aria-label="Zoom out">
          <Svg w={6} h={6}><path d="M0 3h6" stroke="#555" strokeWidth="2" /></Svg>
        </IconButton>
        <ZoomRange type="range" aria-label="Zoom" min={0} max={200} defaultValue={100} />
        <IconButton $w={15} aria-label="Zoom in">
          <Svg w={6} h={6}><path d="M0 3h6M3 0v6" stroke="#555" strokeWidth="2" /></Svg>
        </IconButton>
        <ZoomValue>100%</ZoomValue>
      </StatusBar>

      <Taskbar>
        <TaskShortcuts>
          <IconButton $w={34} $h={28} aria-label="Start"><WindowsIcon /></IconButton>
          <IconButton $w={33} $h={28} aria-label="Search"><SearchIcon s={16} /></IconButton>
          <IconButton $w={35} $h={28} aria-label="Task view"><TaskViewIcon /></IconButton>
          <IconButton $w={35} $h={28} aria-label="Pinned app"><BirdIcon /></IconButton>
        </TaskShortcuts>
        <TaskList>
          {tasks.map((t) => (
            <Task key={t.name} $active={t.active}>
              <TaskIcon>{t.icon}</TaskIcon>
              <span>{t.name}</span>
            </Task>
          ))}
        </TaskList>
        <Tray>
          <IconButton $w={22} aria-label="Hidden icons">
            <Svg w={12} h={7}><path d="M1 6.500l5-5 5 5" stroke="#fff" strokeWidth="1.300" /></Svg>
          </IconButton>
          <IconButton $w={23} aria-label="Battery"><BatteryIcon /></IconButton>
          <IconButton $w={24} aria-label="Network"><WifiIcon /></IconButton>
          <TrayText $w={28}>ENG</TrayText>
          <TrayText $w={44}>23:24</TrayText>
          <IconButton $w={30} aria-label="Notifications"><NoticeIcon /></IconButton>
          <ShowDesktop />
        </Tray>
      </Taskbar>
    </Window>
  );
}
